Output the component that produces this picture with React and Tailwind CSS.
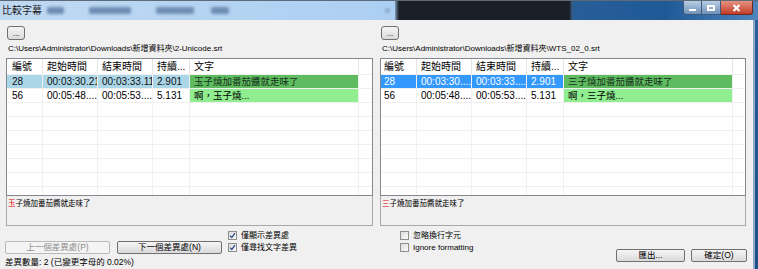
import React from 'react';

const COLS = ['w-[36px]', 'w-[55px]', 'w-[55px]', 'w-[37px]', 'w-[169px]'];
const HEAD = ['編號', '起始時間', '結束時間', '持續...', '文字'];

function Check({ checked }) {
  return (
    <span className="w-[9px] h-[9px] border border-[#8f8f8f] bg-linear-to-br from-[#dcdcdc] to-[#fbfbfb] flex items-center justify-center shrink-0">
      {checked && (
        <svg width="7" height="7" viewBox="0 0 7 7">
          <path d="M1 3.6 L2.8 5.4 L6 1.2" fill="none" stroke="#2f4b8a" strokeWidth="1.3" />
        </svg>
      )}
    </span>
  );
}

function Btn({ children, disabled, className = '' }) {
  return (
    <div
      className={`h-[13px] rounded-[2px] border flex items-center justify-center text-[8.5px] leading-none ${
        disabled
          ? 'border-[#b9b9b9] bg-[#f4f4f4] text-[#8d8d8d]'
          : 'border-[#707070] bg-linear-to-b from-[#f5f5f5] to-[#dadada] text-black'
      } ${className}`}
    >
      {children}
    </div>
  );
}

function ListView({ rows, active, firstPad }) {
  const empty = Array.from({ length: 7 });
  return (
    <div className="h-[138px] border border-[#828790] bg-white overflow-hidden">
      {/* header */}
      <div className="flex h-[16px] border-b border-[#f0f0f0]">
        {HEAD.map((h, i) => (
          <div
            key={h}
            className={`${COLS[i]} shrink-0 border-r border-[#e5e5e5] flex items-center text-[10px] leading-none ${i === 0 ? firstPad : 'pl-[4px]'}`}
          >
            {h}
          </div>
        ))}
        <div className="w-[15px] shrink-0 border-r border-[#e5e5e5]" />
      </div>
      {rows.map((r, ri) => (
        <div key={ri} className="flex h-[14px]">
          {r.cells.map((c, i) => {
            let tone = '';
            if (i < 4 && r.sel) tone = active ? 'bg-[#3399ff] text-white' : 'bg-[#abd6e8] text-[#111]';
            if (i === 4) tone = r.sel ? 'bg-[#5fbb5f] text-[#15301a]' : 'bg-[#90ee90] text-black';
            return (
              <div
                key={i}
                className={`${COLS[i]} shrink-0 border-r border-b border-[#f0f0f0] flex items-center overflow-hidden whitespace-nowrap leading-none ${
                  i === 4 ? 'text-[9.5px]' : 'text-[10px]'
                } ${i === 0 ? firstPad : 'pl-[4px]'} ${tone}`}
              >
                {c}
              </div>
            );
          })}
          <div className="w-[15px] shrink-0 border-r border-b border-[#f0f0f0]" />
        </div>
      ))}
      {empty.map((_, ri) => (
        <div key={`e${ri}`} className="flex h-[14px]">
          {COLS.map((w, i) => (
            <div key={i} className={`${w} shrink-0 border-r border-b border-[#f0f0f0]`} />
          ))}
          <div className="w-[15px] shrink-0 border-r border-b border-[#f0f0f0]" />
        </div>
      ))}
    </div>
  );
}

function Panel({ path, rows, active, firstPad, diffChar, diffRest, width }) {
  return (
    <div className={`${width} flex flex-col`}>
      <div className="ml-[1px] mt-[6px] w-[18px] h-[14px] rounded-[3px] border border-[#707070] bg-linear-to-b from-[#f5f5f5] to-[#dadada] flex items-end justify-center text-[8px] leading-[10px]">
        ...
      </div>
      <div className="h-[18px] flex items-center pl-[2px] text-[8px] leading-none whitespace-nowrap">{path}</div>
      <ListView rows={rows} active={active} firstPad={firstPad} />
      <div className="h-[30px] border-x border-b border-[#a9a9a9] bg-[#f0f0f0] pl-[1px] pt-[4px] text-[7.5px] leading-none whitespace-nowrap">
        <span className="text-[#e00000]">{diffChar}</span>
        {diffRest}
      </div>
    </div>
  );
}

export default function App() {
  const leftRows = [
    { sel: true, cells: ['28', '00:03:30.21', '00:03:33.11', '2.901', '玉子燒加番茄醬就走味了'] },
    { sel: false, cells: ['56', '00:05:48....', '00:05:53....', '5.131', '啊，玉子燒...'] },
  ];
  const rightRows = [
    { sel: true, cells: ['28', '00:03:30....', '00:03:33....', '2.901', '三子燒加番茄醬就走味了'] },
    { sel: false, cells: ['56', '00:05:48....', '00:05:53....', '5.131', '啊，三子燒...'] },
  ];

  return (
    <div className="w-[758px] h-[269px] overflow-hidden flex flex-col font-['Liberation_Sans','Noto_Sans_CJK_TC',sans-serif] text-black">
      {/* title bar */}
      <div className="h-[20px] flex border-t border-[#5d6b79] shrink-0">
        <div className="w-[395px] bg-linear-to-r from-[#c0d9f2] to-[#abcff3] flex items-center">
          <span className="pl-[2px] text-[10px] leading-none text-[#1a1a1a]">比較字幕</span>
          <span className="ml-[5px] w-[17px] h-[7px] rounded-[2px] bg-[#6e8db3] blur-[1.5px]" />
          <span className="ml-[25px] w-[42px] h-[7px] rounded-[2px] bg-[#6e8db3] blur-[1.5px]" />
          <span className="ml-[25px] w-[38px] h-[7px] rounded-[2px] bg-[#6e8db3] blur-[1.5px]" />
          <span className="ml-[17px] w-[18px] h-[7px] rounded-[2px] bg-[#6e8db3] blur-[1.5px]" />
          <span className="ml-[156px] w-[5px] h-[5px] rounded-full bg-[#8ea9c8] blur-[1px]" />
        </div>
        <div className="w-[178px] flex">
          <div className="w-[4px] bg-linear-to-r from-[#7f9cbc] to-[#1a1f27]" />
          <div className="flex-1 bg-[#1a1f27]" />
          <div className="w-[4px] bg-linear-to-r from-[#1a1f27] to-[#3e6a9a]" />
        </div>
        <div className="flex-1 bg-linear-to-r from-[#275e98] via-[#1f5a97] to-[#4f84bc] flex items-start justify-end">
          <div className="w-[19px] h-[14px] rounded-bl-[3px] border border-t-0 border-[#3b5a7e] bg-linear-to-b from-[#b8cde4] to-[#6f91b8] flex items-center justify-center">
            <span className="w-[7px] h-[2px] bg-white mt-[4px]" />
          </div>
          <div className="w-[19px] h-[14px] border-b border-r border-[#3b5a7e] bg-linear-to-b from-[#b8cde4] to-[#6f91b8] flex items-center justify-center">
            <span className="w-[8px] h-[6px] border-2 border-white border-t-[2px]" />
          </div>
          <div className="w-[32px] h-[14px] rounded-br-[3px] border border-t-0 border-l-0 border-[#6b2a22] bg-linear-to-b from-[#e3917f] to-[#c23a27] flex items-center justify-center">
            <svg width="9" height="8" viewBox="0 0 9 8">
              <path d="M1.5 1 L7.5 7 M7.5 1 L1.5 7" stroke="white" strokeWidth="2" />
            </svg>
          </div>
          <div className="w-[5px]" />
        </div>
      </div>

      <div className="flex flex-1">
        {/* client */}
        <div className="w-[753px] bg-[#f0f0f0] flex flex-col">
          <div className="flex pl-[6px] gap-[7px]">
            <Panel
              width="w-[367px]"
              path="C:\Users\Administrator\Downloads\新增資料夾\2-Unicode.srt"
              rows={leftRows}
              active={false}
              firstPad="pl-[5px]"
              diffChar="玉"
              diffRest="子燒加番茄醬就走味了"
            />
            <Panel
              width="w-[366px]"
              path="C:\Users\Administrator\Downloads\新增資料夾\WTS_02_0.srt"
              rows={rightRows}
              active={true}
              firstPad="pl-[3px]"
              diffChar="三"
              diffRest="子燒加番茄醬就走味了"
            />
          </div>

          {/* bottom controls */}
          <div className="flex pl-[5px] gap-[8px]">
            <div className="w-[367px] flex flex-col pt-[5px]">
              <div className="flex">
                <div className="w-[217px] flex gap-[7px] pt-[10px]">
                  <Btn disabled className="w-[105px]">上一個差異處(P)</Btn>
                  <Btn className="w-[105px]">下一個差異處(N)</Btn>
                </div>
                <div className="ml-[6px] flex flex-col gap-[3px]">
                  <div className="flex items-center gap-[4px] h-[9px]">
                    <Check checked />
                    <span className="text-[8px] leading-none">僅顯示差異處</span>
                  </div>
                  <div className="flex items-center gap-[4px] h-[9px]">
                    <Check checked />
                    <span className="text-[8px] leading-none">僅尋找文字差異</span>
                  </div>
                </div>
              </div>
              <div className="mt-[4px] text-[8.5px] leading-none whitespace-nowrap">差異數量: 2 (已變更字母的 0.02%)</div>
            </div>
            <div className="w-[367px] flex justify-between">
              <div className="pl-[20px] pt-[5px] flex flex-col gap-[3px]">
                <div className="flex items-center gap-[4px] h-[9px]">
                  <Check />
                  <span className="text-[8px] leading-none">忽略換行字元</span>
                </div>
                <div className="flex items-center gap-[4px] h-[9px]">
                  <Check />
                  <span className="text-[8px] leading-none">Ignore formatting</span>
                </div>
              </div>
              <div className="pt-[23px] flex gap-[6px]">
                <Btn className="w-[69px]">匯出...</Btn>
                <Btn className="w-[56px]">確定(O)</Btn>
              </div>
            </div>
          </div>
        </div>
        {/* right window frame */}
        <div className="w-[5px] border-l-2 border-[#8eaacb] bg-linear-to-b from-[#2a5f98] to-[#1f4f86]" />
      </div>
    </div>
  );
}
